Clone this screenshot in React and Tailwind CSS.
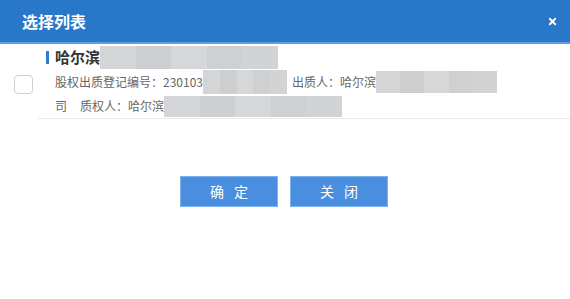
import React from 'react';
import { FaTimes } from 'react-icons/fa';

const font = { fontFamily: '"Noto Sans CJK SC", "Noto Sans", sans-serif' };

const Blur = ({ className = "" }) => (
    <div className={`flex ${className}`}>
        <div className="flex-1 bg-[#d4d5d7]" />
        <div className="flex-1 bg-[#cdced0]" />
        <div className="flex-1 bg-[#d6d7d9]" />
        <div className="flex-1 bg-[#cfd0d2]" />
        <div className="flex-1 bg-[#d2d3d5]" />
    </div>
);

export default function App() {
    return (
        <div className="w-[570px] h-[299px] bg-white overflow-hidden" style={font}>
            <div className="h-[44px] bg-[#2877c9] border-b-2 border-[#5d9fe2] flex items-center justify-between pl-[22px] pr-[12px]">
                <span className="text-white text-[16px] font-bold">选择列表</span>
                <FaTimes className="text-white w-[11px] h-[11px]" />
            </div>
            <div className="flex">
                <div className="w-[38px] flex items-center justify-center pt-[5px]">
                    <div className="w-[19px] h-[19px] rounded-[4px] border border-[#cfd0d3] bg-white ml-[8px]" />
                </div>
                <div className="flex-1 border-b border-[#e8e8e8] pl-[8px] pb-[1px]">
                    <div className="flex items-center h-[25px] pt-[1px]">
                        <div className="w-[3px] h-[13px] bg-[#2d7bd0]" />
                        <span className="ml-[6px] text-[15px] font-bold text-[#333]">哈尔滨</span>
                        <Blur className="w-[178px] h-[23px]" />
                    </div>
                    <div className="flex items-center h-[26px] pl-[9px] text-[12px] text-[#666]">
                        <span>股权出质登记编号：230103</span>
                        <Blur className="w-[84px] h-[24px]" />
                        <span className="ml-[5px]">出质人：哈尔滨</span>
                        <Blur className="w-[121px] h-[22px]" />
                    </div>
                    <div className="flex items-center h-[22px] pl-[9px] text-[12px] text-[#666]">
                        <span>司</span>
                        <span className="ml-[13px]">质权人：哈尔滨</span>
                        <Blur className="w-[178px] h-[21px]" />
                    </div>
                </div>
            </div>
            <div className="flex justify-center gap-[12px] mt-[57px] pr-[2px]">
                <button className="w-[98px] h-[31px] bg-[#4a8fdf] border border-[#7cb2ee] text-white text-[14px] tracking-[10px] pl-[10px]">确定</button>
                <button className="w-[98px] h-[31px] bg-[#4a8fdf] border border-[#7cb2ee] text-white text-[14px] tracking-[10px] pl-[10px]">关闭</button>
            </div>
        </div>
    );
}
